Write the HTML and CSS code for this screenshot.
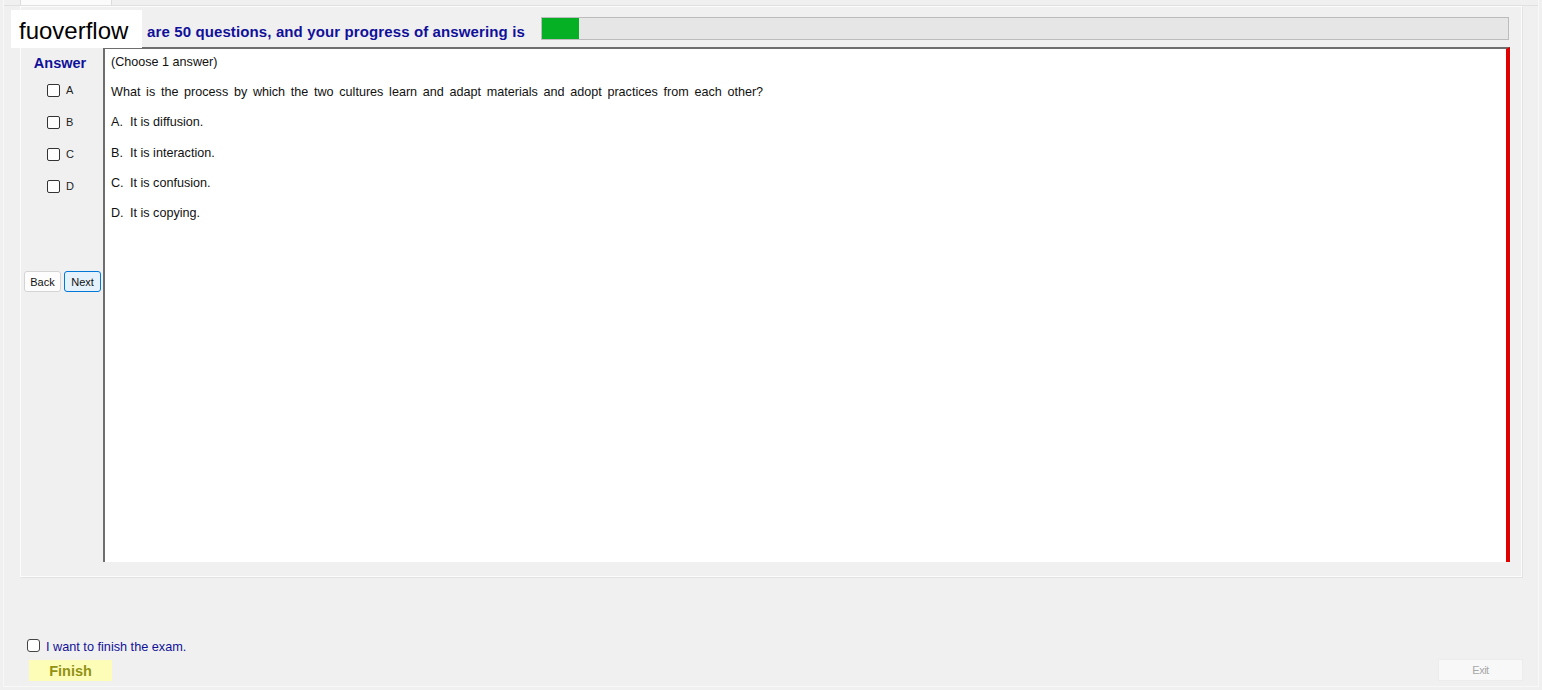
FILE: index.html
```html
<!DOCTYPE html>
<html>
<head>
<meta charset="utf-8">
<link rel="stylesheet" href="styles.css">
</head>
<body>
<div class="window">
  <div class="tabstrip"><div class="tab"></div></div>
  <div class="panel">
    <div class="header">
      <div class="progress-text">are 50 questions, and your progress of answering is</div>
      <div class="progress"><div class="progress-fill" style="width:37px"></div></div>
    </div>
    <div class="main">
      <div class="side">
        <div class="answer-title">Answer</div>
        <div class="opt"><span class="box"></span><span class="opt-label">A</span></div>
        <div class="opt"><span class="box"></span><span class="opt-label">B</span></div>
        <div class="opt"><span class="box"></span><span class="opt-label">C</span></div>
        <div class="opt"><span class="box"></span><span class="opt-label">D</span></div>
        <div class="nav">
          <button class="btn">Back</button>
          <button class="btn btn-next">Next</button>
        </div>
      </div>
      <div class="content">
        <p class="line">(Choose 1 answer)</p>
        <p class="line question">What is the process by which the two cultures learn and adapt materials and adopt practices from each other?</p>
        <p class="line"><span class="letter">A.</span>It is diffusion.</p>
        <p class="line"><span class="letter">B.</span>It is interaction.</p>
        <p class="line"><span class="letter">C.</span>It is confusion.</p>
        <p class="line"><span class="letter">D.</span>It is copying.</p>
      </div>
    </div>
  </div>
  <div class="bottom">
    <div class="finish-check"><span class="box box-round"></span><span class="finish-text">I want to finish the exam.</span></div>
    <div class="bottom-row">
      <button class="finish">Finish</button>
      <button class="exit">Exit</button>
    </div>
  </div>
  <div class="brand">fuoverflow</div>
</div>
</body>
</html>
```

FILE: styles.css
```css
html, body {
  margin: 0;
  padding: 0;
}
body {
  background: #f0f0f0;
  width: 1542px;
  height: 690px;
  overflow: hidden;
  font-family: "Liberation Sans", Arial, sans-serif;
}
.window {
  position: relative;
  margin-left: 3px;
  width: 1534px;
  height: 686px;
  border-left: 1px solid #f8f8f8;
  border-right: 1px solid #f8f8f8;
  border-bottom: 1px solid #f8f8f8;
  display: flex;
  flex-direction: column;
}
.tabstrip {
  height: 5px;
  border-bottom: 1px solid #e0e0e0;
  display: flex;
  padding-left: 16px;
}
.tab {
  width: 90px;
  height: 5px;
  background: #fbfbfb;
  border-left: 1px solid #dcdcdc;
  border-right: 1px solid #dcdcdc;
}
.panel {
  margin-left: 16px;
  width: 1500px;
  height: 569px;
  border: 1px solid #fcfcfc;
  box-shadow: 1px 1px 0 #e2e2e2;
  display: flex;
  flex-direction: column;
}
.header {
  height: 40px;
  display: flex;
  align-items: flex-start;
  padding-left: 126px;
  padding-right: 12px;
}
.progress-text {
  margin-top: 16px;
  font-size: 15px;
  font-weight: bold;
  letter-spacing: 0.12px;
  color: #10109a;
  line-height: 17px;
  white-space: nowrap;
  width: 394px;
}
.progress {
  margin-top: 10px;
  flex: 1;
  height: 21px;
  background: #e6e6e6;
  border: 1px solid #bcbcbc;
}
.progress-fill {
  height: 21px;
  background: #06b025;
}
.main {
  display: flex;
  height: 515px;
}
.side {
  width: 82px;
  display: flex;
  flex-direction: column;
}
.answer-title {
  margin-top: 8px;
  height: 16px;
  line-height: 16px;
  font-size: 14.5px;
  font-weight: bold;
  color: #10109a;
  text-align: center;
  padding-right: 4px;
  margin-bottom: 3px;
}
.opt {
  height: 32px;
  display: flex;
  align-items: center;
  padding-left: 26px;
  font-size: 11px;
  color: #222;
}
.box {
  display: inline-block;
  width: 11px;
  height: 11px;
  border: 1px solid #333;
  border-radius: 2px;
  background: #fff;
}
.opt-label {
  margin-left: 6px;
}
.nav {
  margin-top: 69px;
  display: flex;
  gap: 3px;
  padding-left: 3px;
}
.btn {
  height: 21px;
  width: 37px;
  padding: 0;
  font-family: "Liberation Sans", Arial, sans-serif;
  font-size: 11px;
  color: #111;
  background: #fdfdfd;
  border: 1px solid #d4d4d4;
  border-radius: 3px;
}
.btn-next {
  background: #e5f1fb;
  border: 1px solid #0078d7;
}
.content {
  height: 512px;
  background: #fff;
  border-top: 2px solid #6e6e6e;
  border-left: 2px solid #6e6e6e;
  border-right: 4px solid #e00000;
  box-shadow: 1px 0 0 #fafafa;
  padding-left: 6px;
  padding-top: 1px;
  box-sizing: content-box;
  width: 1395px;
}
.line {
  margin: 0 0 6.2px 0;
  line-height: 24px;
  font-size: 12.6px;
  color: #111;
  white-space: nowrap;
}
.question {
  word-spacing: 2.2px;
}
.letter {
  display: inline-block;
  width: 19px;
}
.bottom {
  margin-top: auto;
  padding-left: 23px;
  padding-bottom: 5px;
}
.finish-check {
  display: flex;
  align-items: center;
  height: 16px;
  margin-bottom: 6px;
}
.box-round {
  border-radius: 3px;
  border-color: #444;
}
.finish-text {
  margin-left: 6px;
  font-size: 12.7px;
  color: #10109a;
  margin-top: 4px;
}
.bottom-row {
  display: flex;
  justify-content: space-between;
  align-items: flex-end;
  padding-right: 15px;
}
.finish {
  margin-left: 2px;
  width: 83px;
  height: 21px;
  padding: 0;
  border: none;
  background: #fdfdb8;
  font-family: "Liberation Sans", Arial, sans-serif;
  font-size: 14.5px;
  font-weight: bold;
  color: #929214;
}
.exit {
  width: 85px;
  height: 22px;
  padding: 0;
  border: 1px solid #ececec;
  background: #f8f8f8;
  font-family: "Liberation Sans", Arial, sans-serif;
  font-size: 11px;
  color: #a8a8a8;
  letter-spacing: -0.5px;
}
.brand {
  position: absolute;
  left: 7px;
  top: 10px;
  width: 131px;
  height: 38px;
  background: #fff;
  font-size: 24px;
  line-height: 42px;
  color: #000;
  padding-left: 8px;
  box-sizing: border-box;
}
```
